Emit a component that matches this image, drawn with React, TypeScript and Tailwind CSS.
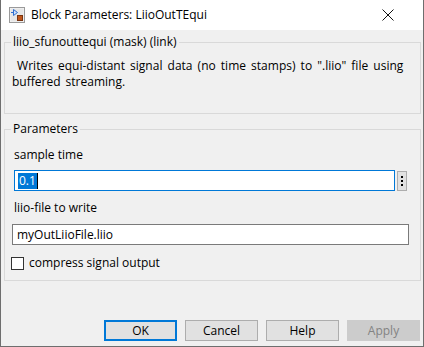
import type { ReactNode } from 'react'

const font = { fontFamily: '"Open Sans", "Noto Sans", sans-serif' }

function TitleIcon() {
  return (
    <svg width="16" height="16" viewBox="0 0 16 16" className="shrink-0">
      <rect x="0.5" y="0.5" width="15" height="15" fill="#f4f4f4" stroke="#9a9a9a" />
      <rect x="1.5" y="1.5" width="13" height="13" fill="#e6e6e6" />
      <path d="M2 5.5h2" stroke="#2f6fd0" strokeWidth="1" />
      <path d="M4.5 2.5v6l4-3z" fill="#cfe0fa" stroke="#2f6fd0" strokeWidth="1" />
      <rect x="8.5" y="8.5" width="5" height="5" fill="#c0561a" stroke="#7a3410" />
    </svg>
  )
}

function GroupBox({ title, children, className }: { title: string; children: ReactNode; className?: string }) {
  return (
    <fieldset className={`border border-[#d9d9d9] mx-[3px] w-[417px] ${className ?? ''}`}>
      <legend className="ml-[6px] px-[2px] leading-[16px]">{title}</legend>
      {children}
    </fieldset>
  )
}

function Button({ label, variant }: { label: string; variant?: 'default' | 'disabled' }) {
  const base = 'w-[73px] h-[21px] flex items-center justify-center leading-none'
  if (variant === 'default')
    return <div className={`${base} border-2 border-[#0078d7] bg-[#e1e1e1]`}>{label}</div>
  if (variant === 'disabled')
    return <div className={`${base} border border-[#cccccc] bg-[#cccccc] text-[#838383]`}>{label}</div>
  return <div className={`${base} border border-[#adadad] bg-[#e1e1e1]`}>{label}</div>
}

export default function App() {
  return (
    <div
      style={font}
      className="w-[424px] h-[347px] flex flex-col border-x border-b border-[#6e6e6e] bg-[#f0f0f0] text-[12px] text-black overflow-hidden"
    >
      {/* Title bar */}
      <div className="h-[30px] shrink-0 bg-white flex items-center pl-[8px] pr-[29px]">
        <TitleIcon />
        <span className="ml-[6px] text-[12px] leading-none">Block Parameters: LiioOutTEqui</span>
        <svg width="12" height="12" viewBox="0 0 12 12" className="ml-auto">
          <path d="M0.5 0.5l11 11M11.5 0.5l-11 11" stroke="#111" strokeWidth="1" />
        </svg>
      </div>

      <GroupBox title="liio_sfunouttequi (mask) (link)" className="mt-[4px] h-[80px]">
        <div className="pt-[8px] pl-[7px] pr-[8px] leading-[16px] [word-spacing:2px]">
          &nbsp;Writes equi-distant signal data (no time stamps) to ".liio" file using buffered streaming.
        </div>
      </GroupBox>

      <GroupBox title="Parameters" className="mt-[7px] h-[160px]">
        <div className="pl-[9px] pr-[8px] flex flex-col">
          <div className="mt-[10px] leading-[16px]">sample time</div>
          <div className="mt-[7px] flex items-center gap-[2px]">
            <div className="w-[381px] h-[21px] border border-[#0078d7] bg-white flex items-center pl-[3px]">
              <span className="bg-[#0078d7] text-white h-[16px] leading-[16px] px-[1px]">0.1</span>
              <span className="w-[1px] h-[16px] bg-black" />
            </div>
            <div className="w-[10px] h-[20px] border border-[#adadad] bg-[#e1e1e1] flex flex-col items-center justify-center gap-[2px]">
              <span className="w-[2px] h-[2px] bg-black" />
              <span className="w-[2px] h-[2px] bg-black" />
              <span className="w-[2px] h-[2px] bg-black" />
            </div>
          </div>
          <div className="mt-[9px] leading-[16px]">liio-file to write</div>
          <div className="mt-[8px] w-[397px] -ml-[2px] h-[21px] border border-[#7a7a7a] bg-white flex items-center pl-[4px]">
            myOutLiioFile.liio
          </div>
          <label className="mt-[10px] -ml-[3px] flex items-center gap-[5px] leading-[16px]">
            <span className="w-[13px] h-[13px] border border-[#333] bg-white" />
            compress signal output
          </label>
        </div>
      </GroupBox>

      <div className="mt-auto mb-[5px] flex gap-[8px] pl-[103px]">
        <Button label="OK" variant="default" />
        <Button label="Cancel" />
        <Button label="Help" />
        <Button label="Apply" variant="disabled" />
      </div>
    </div>
  )
}
